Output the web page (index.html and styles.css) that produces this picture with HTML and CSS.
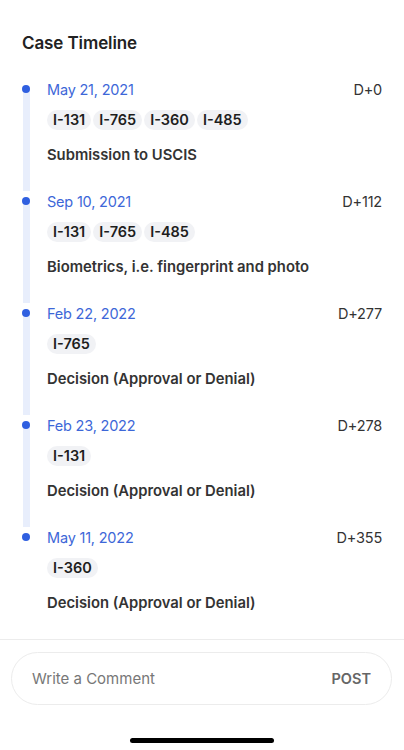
FILE: index.html
```html
<!DOCTYPE html>
<html lang="en">
<head>
<meta charset="utf-8">
<title>Case Timeline</title>
<link rel="stylesheet" href="styles.css">
</head>
<body>
<div class="screen">
  <main class="content">
    <h2 class="title">Case Timeline</h2>
    <ol class="timeline">
      <li class="event">
        <div class="rail"><span class="dot"></span><span class="line"></span></div>
        <div class="body">
          <div class="head"><span class="date">May 21, 2021</span><span class="delta">D+0</span></div>
          <div class="chips"><span class="chip">I-131</span><span class="chip">I-765</span><span class="chip">I-360</span><span class="chip">I-485</span></div>
          <p class="desc">Submission to USCIS</p>
        </div>
      </li>
      <li class="event">
        <div class="rail"><span class="dot"></span><span class="line"></span></div>
        <div class="body">
          <div class="head"><span class="date">Sep 10, 2021</span><span class="delta">D+112</span></div>
          <div class="chips"><span class="chip">I-131</span><span class="chip">I-765</span><span class="chip">I-485</span></div>
          <p class="desc">Biometrics, i.e. fingerprint and photo</p>
        </div>
      </li>
      <li class="event">
        <div class="rail"><span class="dot"></span><span class="line"></span></div>
        <div class="body">
          <div class="head"><span class="date">Feb 22, 2022</span><span class="delta">D+277</span></div>
          <div class="chips"><span class="chip">I-765</span></div>
          <p class="desc">Decision (Approval or Denial)</p>
        </div>
      </li>
      <li class="event">
        <div class="rail"><span class="dot"></span><span class="line"></span></div>
        <div class="body">
          <div class="head"><span class="date">Feb 23, 2022</span><span class="delta">D+278</span></div>
          <div class="chips"><span class="chip">I-131</span></div>
          <p class="desc">Decision (Approval or Denial)</p>
        </div>
      </li>
      <li class="event last">
        <div class="rail"><span class="dot"></span><span class="line"></span></div>
        <div class="body">
          <div class="head"><span class="date">May 11, 2022</span><span class="delta">D+355</span></div>
          <div class="chips"><span class="chip">I-360</span></div>
          <p class="desc">Decision (Approval or Denial)</p>
        </div>
      </li>
    </ol>
  </main>
  <footer class="composer">
    <div class="comment-box">
      <span class="placeholder">Write a Comment</span>
      <span class="post">POST</span>
    </div>
    <div class="home-bar"></div>
  </footer>
</div>
</body>
</html>
```

FILE: styles.css
```css
* { box-sizing: border-box; }
html, body { margin: 0; padding: 0; background: #fff; }
body {
  font-family: Inter, "Noto Sans", sans-serif;
  color: #222;
}
.screen {
  width: 404px;
  height: 750px;
  display: flex;
  flex-direction: column;
  overflow: hidden;
}
.content { flex: 1; padding: 31px 0 0 0; }
.title {
  margin: 0 0 24px 22px;
  font-size: 17px;
  line-height: 24px;
  font-weight: 600;
  color: #222;
  letter-spacing: -0.1px;
}
.timeline { list-style: none; margin: 0; padding: 0; }
.event {
  display: flex;
  height: 112px;
}
.rail {
  width: 8px;
  margin-left: 22px;
  margin-right: 17px;
  display: flex;
  flex-direction: column;
  align-items: center;
}
.dot {
  position: relative;
  z-index: 1;
  width: 8px;
  height: 8px;
  border-radius: 50%;
  background: #2f5fe0;
  margin-top: 6px;
  flex: none;
}
.line {
  width: 7px;
  flex: 1;
  background: #e8eefc;
  margin-top: -4px;
}
.last .line { background: transparent; }
.body { flex: 1; padding-right: 22px; }
.head {
  display: flex;
  justify-content: space-between;
  align-items: center;
  height: 20px;
}
.date {
  font-size: 14.5px;
  color: #3d67d8;
  letter-spacing: -0.2px;
}
.delta {
  font-size: 14.5px;
  color: #333;
  letter-spacing: -0.2px;
}
.chips {
  display: flex;
  gap: 2px;
  margin-top: 11px;
}
.chip {
  height: 20px;
  line-height: 20px;
  padding: 0 6px;
  border-radius: 10px;
  background: #f1f2f5;
  font-size: 14.5px;
  font-weight: 600;
  color: #1e1e1e;
}
.desc {
  margin: 15px 0 0 0;
  line-height: 20px;
  font-size: 14.8px;
  font-weight: 600;
  color: #333;
}
.composer {
  border-top: 1px solid #ececec;
  height: 114px;
  flex: none;
  display: flex;
  flex-direction: column;
  align-items: center;
}
.comment-box {
  margin-top: 12px;
  width: 381px;
  height: 53px;
  border: 1px solid #ececec;
  border-radius: 27px;
  display: flex;
  align-items: center;
  justify-content: space-between;
  padding: 0 20px 0 20px;
  align-self: flex-start;
  margin-left: 11px;
}
.placeholder {
  font-size: 15px;
  color: #777;
}
.post {
  font-size: 14.5px;
  font-weight: 600;
  color: #666;
}
.home-bar {
  margin-top: 33px;
  width: 144px;
  height: 5px;
  border-radius: 3px;
  background: #000;
}
```
